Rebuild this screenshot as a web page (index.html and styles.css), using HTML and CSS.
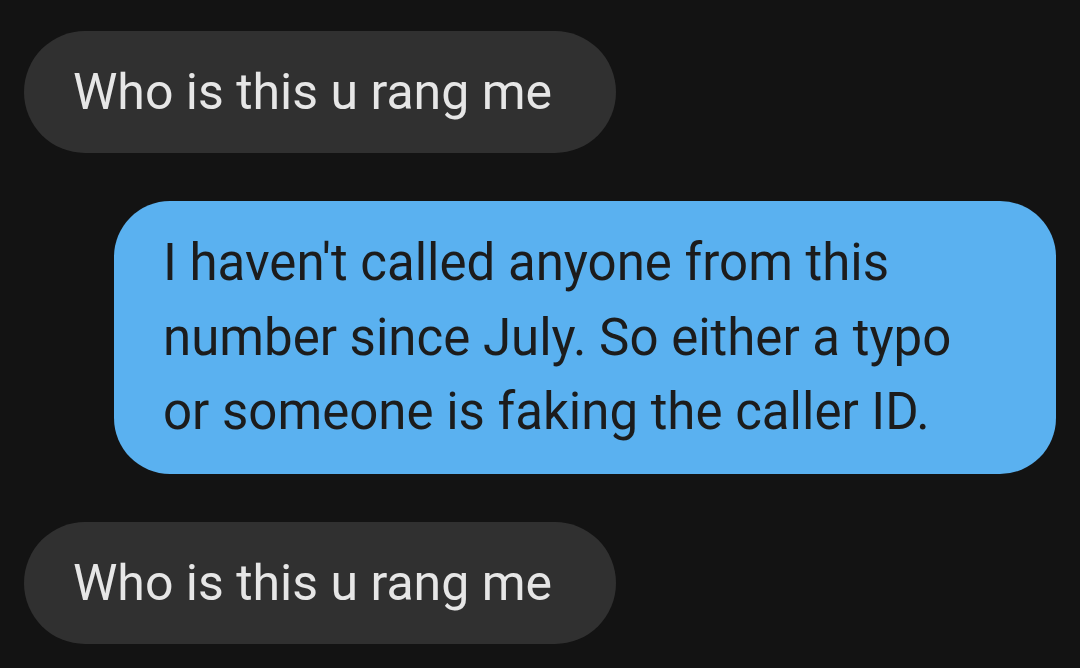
FILE: index.html
```html
<!DOCTYPE html>
<html lang="en">
<head>
<meta charset="utf-8">
<title>Messages</title>
<link rel="stylesheet" href="styles.css">
</head>
<body>
<main class="thread">
  <div class="msg msg-in">Who is this u rang me</div>
  <div class="msg msg-out">I haven't called anyone from this number since July. So either a typo or someone is faking the caller ID.</div>
  <div class="msg msg-in">Who is this u rang me</div>
  <div class="meta">11:48 AM</div>
</main>
</body>
</html>
```

FILE: styles.css
```css
html, body {
  margin: 0;
  padding: 0;
  background: #131313;
  height: 100%;
  overflow: hidden;
}

.thread {
  display: flex;
  flex-direction: column;
  gap: 48px;
  padding: 31px 24px 0 24px;
  font-family: Roboto, "Noto Sans", sans-serif;
}

.msg {
  box-sizing: border-box;
}

.msg-in {
  align-self: flex-start;
  background: #303030;
  color: #e6e6e6;
  font-size: 50px;
  height: 122px;
  line-height: 122px;
  border-radius: 61px;
  padding: 0 64px 0 49px;
  white-space: nowrap;
}

.msg-out {
  align-self: flex-end;
  width: 942px;
  background: #5ab1f0;
  color: #1c1c1c;
  font-size: 51px;
  line-height: 74.5px;
  border-radius: 56px;
  padding: 25px 100px 24px 49px;
}

.meta {
  margin-top: -27px;
  padding-left: 68px;
  color: #8a8a8a;
  font-size: 30px;
}
```
